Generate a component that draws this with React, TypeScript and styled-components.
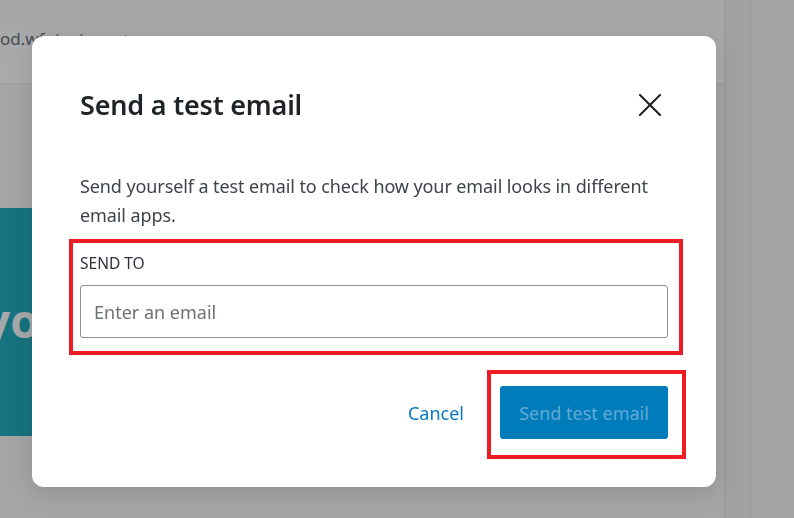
import styled, { createGlobalStyle } from 'styled-components';

const GlobalStyle = createGlobalStyle`
  html, body {
    margin: 0;
    padding: 0;
    width: 794px;
    height: 518px;
    overflow: hidden;
    font-family: 'Noto Sans', 'Open Sans', Arial, sans-serif;
  }
`;

const App = () => {
  return (
    <>
      <GlobalStyle />
      <Page>
        <PageMain>
          <PageHeader>
            <HeaderText>od.wfntest.com&gt;</HeaderText>
          </PageHeader>
          <PageBody>
            <Banner>
              <BannerText>you</BannerText>
            </Banner>
          </PageBody>
        </PageMain>
        <SideRail />
        <SidePanel />
      </Page>

      <Overlay>
        <Modal role='dialog' aria-labelledby='test-email-title'>
          <ModalHeader>
            <Title id='test-email-title'>Send a test email</Title>
            <CloseButton aria-label='Close'>
              <svg width='22' height='22' viewBox='0 0 22 22' fill='none'>
                <path
                  d='M1 1L21 21M21 1L1 21'
                  stroke='#1e1e1e'
                  strokeWidth='2'
                  strokeLinecap='square'
                />
              </svg>
            </CloseButton>
          </ModalHeader>

          <Description>
            Send yourself a test email to check how your email looks in
            different email apps.
          </Description>

          <FieldGroup>
            <Label htmlFor='send-to'>SEND TO</Label>
            <Input id='send-to' type='email' placeholder='Enter an email' />
            <Highlight $inset='-14px -15px -17px -11px' />
          </FieldGroup>

          <Footer>
            <CancelButton>Cancel</CancelButton>
            <SendWrap>
              <SendButton disabled>Send test email</SendButton>
              <Highlight $inset='-16px -18px -20px -13px' />
            </SendWrap>
          </Footer>
        </Modal>
      </Overlay>
    </>
  );
};

export default App;

const Page = styled.div`
  display: flex;
  width: 794px;
  height: 518px;
  background-color: #a6a7a9;
`;

const PageMain = styled.div`
  flex: 1;
  display: flex;
  flex-direction: column;
  min-width: 0;
`;

const PageHeader = styled.div`
  height: 83px;
  border-bottom: 1px solid #9c9d9f;
  background: linear-gradient(180deg, #a5a6a8 0%, #aaabad 100%);
  overflow: hidden;
`;

const HeaderText = styled.div`
  margin: 27px 0 0 0;
  font-size: 17px;
  color: #4a4b4d;
  white-space: nowrap;
`;

const PageBody = styled.div`
  flex: 1;
  padding-top: 124px;
  background-color: #a4a5a7;
`;

const Banner = styled.div`
  height: 228px;
  width: 400px;
  background-color: #16737f;
  display: flex;
  align-items: center;
  overflow: hidden;
`;

const BannerText = styled.div`
  font-family: 'Open Sans', sans-serif;
  font-weight: 700;
  font-size: 46px;
  color: #a5a9ab;
  white-space: nowrap;
  margin-left: -16px;
  margin-top: -4px;
`;

const SideRail = styled.div`
  width: 25px;
  background-color: #a0a1a3;
  border-left: 1px solid #97989a;
  border-right: 1px solid #97989a;
`;

const SidePanel = styled.div`
  width: 43px;
  background-color: #a3a4a6;
`;

const Overlay = styled.div`
  position: fixed;
  inset: 0;
  display: flex;
  align-items: flex-start;
  padding: 36px 0 0 32px;
`;

const Modal = styled.div`
  box-sizing: border-box;
  width: 684px;
  height: 451px;
  background-color: #ffffff;
  border-radius: 12px;
  box-shadow: 0 6px 24px rgba(0, 0, 0, 0.12);
  padding: 50px 48px 0 48px;
  display: flex;
  flex-direction: column;
`;

const ModalHeader = styled.div`
  display: flex;
  align-items: center;
  justify-content: space-between;
  height: 36px;
`;

const Title = styled.h1`
  margin: 0;
  font-size: 27px;
  font-weight: 600;
  color: #1e2327;
  letter-spacing: -0.2px;
`;

const CloseButton = styled.button`
  border: 0;
  background: transparent;
  padding: 0;
  width: 22px;
  height: 22px;
  margin-right: 7px;
  margin-top: 2px;
  display: flex;
  cursor: pointer;
`;

const Description = styled.p`
  margin: 50px 0 0 0;
  font-size: 18px;
  line-height: 29px;
  color: #3c434a;
  letter-spacing: -0.1px;
`;

const FieldGroup = styled.div`
  position: relative;
  display: flex;
  flex-direction: column;
  margin-top: 23px;
`;

const Label = styled.label`
  font-size: 15.5px;
  line-height: 20px;
  color: #2c3338;
  margin-bottom: 12px;
`;

const Input = styled.input`
  box-sizing: border-box;
  height: 53px;
  width: 100%;
  border: 1px solid #8c8f94;
  border-radius: 3px;
  padding: 0 13px;
  font-family: inherit;
  font-size: 18px;
  color: #2c3338;
  outline: none;
  &::placeholder {
    color: #6d7075;
  }
`;

const Footer = styled.div`
  display: flex;
  align-items: center;
  justify-content: flex-end;
  gap: 36px;
  margin-top: 48px;
`;

const CancelButton = styled.button`
  border: 0;
  background: transparent;
  padding: 0;
  font-family: inherit;
  font-size: 18px;
  color: #0a7bbf;
  cursor: pointer;
`;

const SendWrap = styled.div`
  position: relative;
  display: flex;
`;

const SendButton = styled.button`
  height: 53px;
  width: 168px;
  border: 0;
  border-radius: 3px;
  background-color: #007cba;
  color: #62a9d6;
  font-family: inherit;
  font-size: 18px;
  padding: 0;
`;

const Highlight = styled.div<{ $inset: string }>`
  position: absolute;
  inset: ${(p) => p.$inset};
  border: 4px solid #ed1c24;
  pointer-events: none;
`;
